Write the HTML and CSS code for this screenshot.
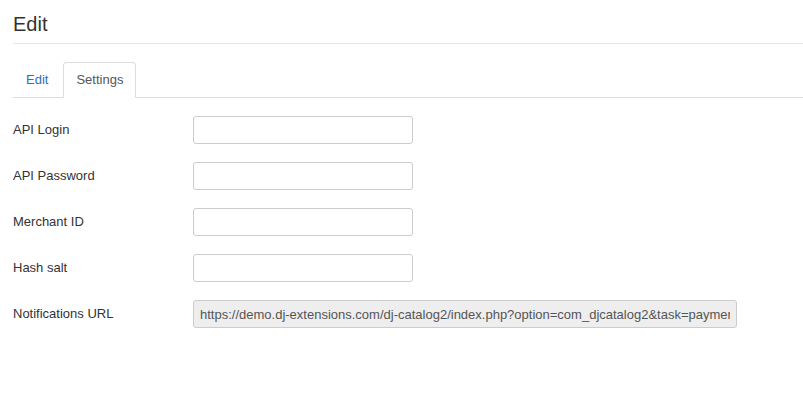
FILE: index.html
```html
<!DOCTYPE html>
<html>
<head>
<meta charset="utf-8">
<link rel="stylesheet" href="styles.css">
</head>
<body>
<div class="page">
  <h1 class="page-title">Edit</h1>
  <ul class="nav-tabs">
    <li class="tab"><a class="tab-link">Edit</a></li>
    <li class="tab active"><a class="tab-link">Settings</a></li>
  </ul>
  <form class="form">
    <div class="row"><label class="label">API Login</label><input class="input" type="text"></div>
    <div class="row"><label class="label">API Password</label><input class="input" type="text"></div>
    <div class="row"><label class="label">Merchant ID</label><input class="input" type="text"></div>
    <div class="row"><label class="label">Hash salt</label><input class="input" type="text"></div>
    <div class="row"><label class="label">Notifications URL</label><input class="input input-wide" type="text" readonly value="https://demo.dj-extensions.com/dj-catalog2/index.php?option=com_djcatalog2&amp;task=payment.notify&amp;pg=dotpay"></div>
  </form>
</div>
</body>
</html>
```
FILE: styles.css
```css
html, body {
  margin: 0;
  padding: 0;
  background: #fff;
}
body {
  font-family: "Liberation Sans", Arial, sans-serif;
  font-size: 13px;
  color: #333;
}
.page {
  padding-left: 13px;
}
.page-title {
  margin: 0;
  padding: 12px 0 7px;
  font-size: 20px;
  line-height: 24px;
  font-weight: normal;
  color: #333;
  border-bottom: 1px solid #e5e5e5;
}
.nav-tabs {
  list-style: none;
  margin: 18px 0 0;
  padding: 0;
  display: flex;
  border-bottom: 1px solid #ddd;
}
.tab {
  margin-bottom: -1px;
  margin-right: 2px;
}
.tab-link {
  display: block;
  padding: 8px 12px;
  line-height: 18px;
  border: 1px solid transparent;
  border-radius: 4px 4px 0 0;
  color: #2f6fb5;
  cursor: pointer;
}
.tab.active .tab-link {
  color: #555;
  background: #fff;
  border-color: #ddd #ddd transparent;
}
.form {
  margin: 18px 0 0;
  display: flex;
  flex-direction: column;
  gap: 18px;
}
.row {
  display: flex;
  align-items: center;
}
.label {
  width: 180px;
  flex: none;
  color: #333;
  line-height: 18px;
}
.input {
  box-sizing: border-box;
  width: 220px;
  height: 28px;
  margin: 0;
  padding: 4px 6px;
  border: 1px solid #ccc;
  border-radius: 3px;
  font-family: "Liberation Sans", Arial, sans-serif;
  font-size: 13px;
  color: #555;
  background: #fff;
  outline: none;
}
.input-wide {
  width: 544px;
  background: #eee;
}
```
